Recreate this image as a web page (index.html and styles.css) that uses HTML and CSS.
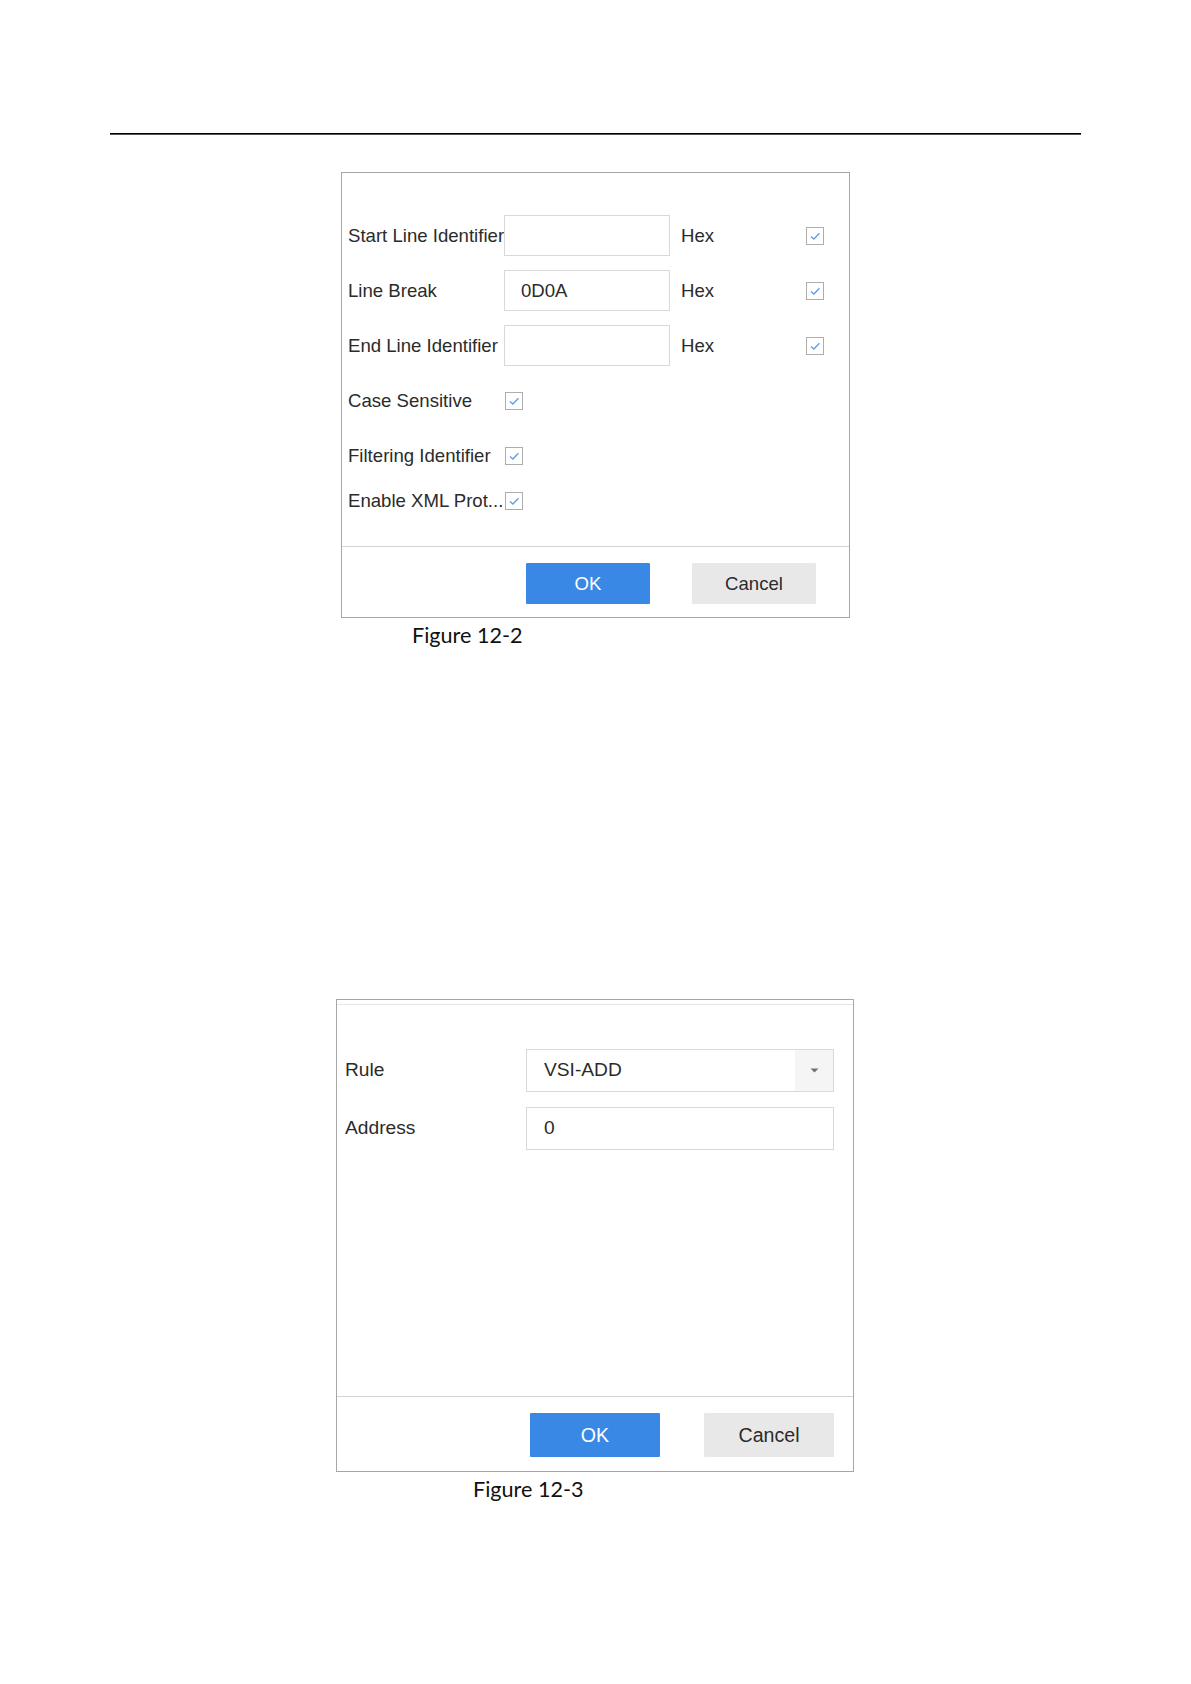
FILE: index.html
```html
<!DOCTYPE html>
<html>
  <head>
    <title>Figure 12-2 / 12-3</title>
    <link rel="stylesheet" href="styles.css">
  </head>
  <body>
    <div class="page">
      <div class="rule"></div>

      <div class="figure figure-a">
        <div class="dialog dialog-a">
          <div class="form">
            <div class="row">
              <span class="label">Start Line Identifier</span>
              <span class="input"></span>
              <span class="unit">Hex</span>
              <span class="check"><svg width="18" height="18" viewBox="0 0 18 18"><rect x="0.5" y="0.5" width="17" height="17" fill="#fff" stroke="#adadad"/><path d="M5 9.4 L7.9 12 L13.4 6.2" fill="none" stroke="#5e9ee6" stroke-width="1.3"/></svg></span>
            </div>
            <div class="row">
              <span class="label">Line Break</span>
              <span class="input">0D0A</span>
              <span class="unit">Hex</span>
              <span class="check"><svg width="18" height="18" viewBox="0 0 18 18"><rect x="0.5" y="0.5" width="17" height="17" fill="#fff" stroke="#adadad"/><path d="M5 9.4 L7.9 12 L13.4 6.2" fill="none" stroke="#5e9ee6" stroke-width="1.3"/></svg></span>
            </div>
            <div class="row">
              <span class="label">End Line Identifier</span>
              <span class="input"></span>
              <span class="unit">Hex</span>
              <span class="check"><svg width="18" height="18" viewBox="0 0 18 18"><rect x="0.5" y="0.5" width="17" height="17" fill="#fff" stroke="#adadad"/><path d="M5 9.4 L7.9 12 L13.4 6.2" fill="none" stroke="#5e9ee6" stroke-width="1.3"/></svg></span>
            </div>
            <div class="row">
              <span class="label">Case Sensitive</span>
              <span class="check check-inline"><svg width="18" height="18" viewBox="0 0 18 18"><rect x="0.5" y="0.5" width="17" height="17" fill="#fff" stroke="#adadad"/><path d="M5 9.4 L7.9 12 L13.4 6.2" fill="none" stroke="#5e9ee6" stroke-width="1.3"/></svg></span>
            </div>
            <div class="row">
              <span class="label">Filtering Identifier</span>
              <span class="check check-inline"><svg width="18" height="18" viewBox="0 0 18 18"><rect x="0.5" y="0.5" width="17" height="17" fill="#fff" stroke="#adadad"/><path d="M5 9.4 L7.9 12 L13.4 6.2" fill="none" stroke="#5e9ee6" stroke-width="1.3"/></svg></span>
            </div>
            <div class="row row-short">
              <span class="label">Enable XML Prot...</span>
              <span class="check check-inline"><svg width="18" height="18" viewBox="0 0 18 18"><rect x="0.5" y="0.5" width="17" height="17" fill="#fff" stroke="#adadad"/><path d="M5 9.4 L7.9 12 L13.4 6.2" fill="none" stroke="#5e9ee6" stroke-width="1.3"/></svg></span>
            </div>
          </div>
          <div class="footer">
            <button class="btn btn-ok">OK</button>
            <button class="btn btn-cancel">Cancel</button>
          </div>
        </div>
        <p class="caption">Figure 12-2</p>
      </div>

      <div class="figure figure-b">
        <div class="dialog dialog-b">
          <div class="head"></div>
          <div class="form">
            <div class="row">
              <span class="label">Rule</span>
              <span class="select">
                <span class="select-value">VSI-ADD</span>
                <span class="select-arrow"><svg width="9" height="5" viewBox="0 0 9 5"><path d="M0.5 0.5 L8.5 0.5 L4.5 4.5 Z" fill="#707070"/></svg></span>
              </span>
            </div>
            <div class="row">
              <span class="label">Address</span>
              <span class="input">0</span>
            </div>
          </div>
          <div class="footer">
            <button class="btn btn-ok">OK</button>
            <button class="btn btn-cancel">Cancel</button>
          </div>
        </div>
        <p class="caption">Figure 12-3</p>
      </div>
    </div>
  </body>
</html>
```

FILE: styles.css
```css
body {
  margin: 0;
  background: #fff;
  font-family: "Liberation Sans", Arial, sans-serif;
  color: #2b2b2b;
}

.page {
  padding-top: 133px;
}

.rule {
  margin: 0 110px;
  border-top: 1px solid #000;
  height: 1px;
  background: #555;
}

/* figures */
.figure-a {
  margin: 37px 0 0 341px;
}

.figure-b {
  margin: 351px 0 0 336px;
}

.dialog {
  box-sizing: border-box;
  border: 1px solid #a6a6a6;
  background: #fff;
}

.dialog-a {
  width: 509px;
}

.dialog-b {
  width: 518px;
}

.head {
  height: 4px;
  border-bottom: 1px solid #e6e6e6;
}

.dialog-a .form {
  font-size: 18.6px;
  padding: 35px 0 28px 6px;
}

.dialog-b .form {
  font-size: 19.2px;
  padding: 36px 0 239px 8px;
}

.row {
  display: flex;
  align-items: center;
  height: 55px;
}

.row-short {
  height: 35px;
}

.dialog-b .row {
  height: 58px;
}

.label {
  flex: 0 0 auto;
  width: 156px;
  white-space: nowrap;
}

.dialog-b .label {
  width: 181px;
}

.input {
  box-sizing: border-box;
  display: flex;
  align-items: center;
  width: 166px;
  height: 41px;
  padding-left: 16px;
  border: 1px solid #d9d9d9;
  background: #fff;
}

.dialog-b .input {
  width: 308px;
  height: 43px;
  padding-left: 17px;
}

.unit {
  width: 125px;
  margin-left: 11px;
}

.check {
  display: flex;
  width: 18px;
  height: 18px;
}

.check-inline {
  margin-left: 1px;
}

.select {
  box-sizing: border-box;
  display: flex;
  width: 308px;
  height: 43px;
  border: 1px solid #d9d9d9;
}

.select-value {
  flex: 1;
  display: flex;
  align-items: center;
  padding-left: 17px;
}

.select-arrow {
  display: flex;
  align-items: center;
  justify-content: center;
  width: 38px;
  background: #f5f5f5;
}

/* buttons */
.footer {
  display: flex;
  justify-content: flex-end;
  border-top: 1px solid #d4d4d4;
}

.dialog-a .footer {
  gap: 42px;
  padding: 16px 33px 13px 0;
}

.dialog-b .footer {
  gap: 44px;
  padding: 16px 19px 14px 0;
}

.btn {
  border: none;
  border-radius: 1px;
  font-family: "Liberation Sans", Arial, sans-serif;
  padding: 0;
}

.dialog-a .btn {
  width: 124px;
  height: 41px;
  font-size: 18.6px;
}

.dialog-b .btn {
  width: 130px;
  height: 44px;
  font-size: 19.6px;
}

.btn-ok {
  background: #3a88e5;
  color: #fff;
}

.btn-cancel {
  background: #e8e8e8;
  color: #2b2b2b;
}

.caption {
  margin: 4px 0 0;
  font-family: Lato, "Open Sans", sans-serif;
  font-size: 21.6px;
  line-height: 26px;
  color: #111;
}

.figure-a .caption {
  margin-left: 71px;
}

.figure-b .caption {
  margin-left: 137px;
  margin-top: 4px;
}
```
